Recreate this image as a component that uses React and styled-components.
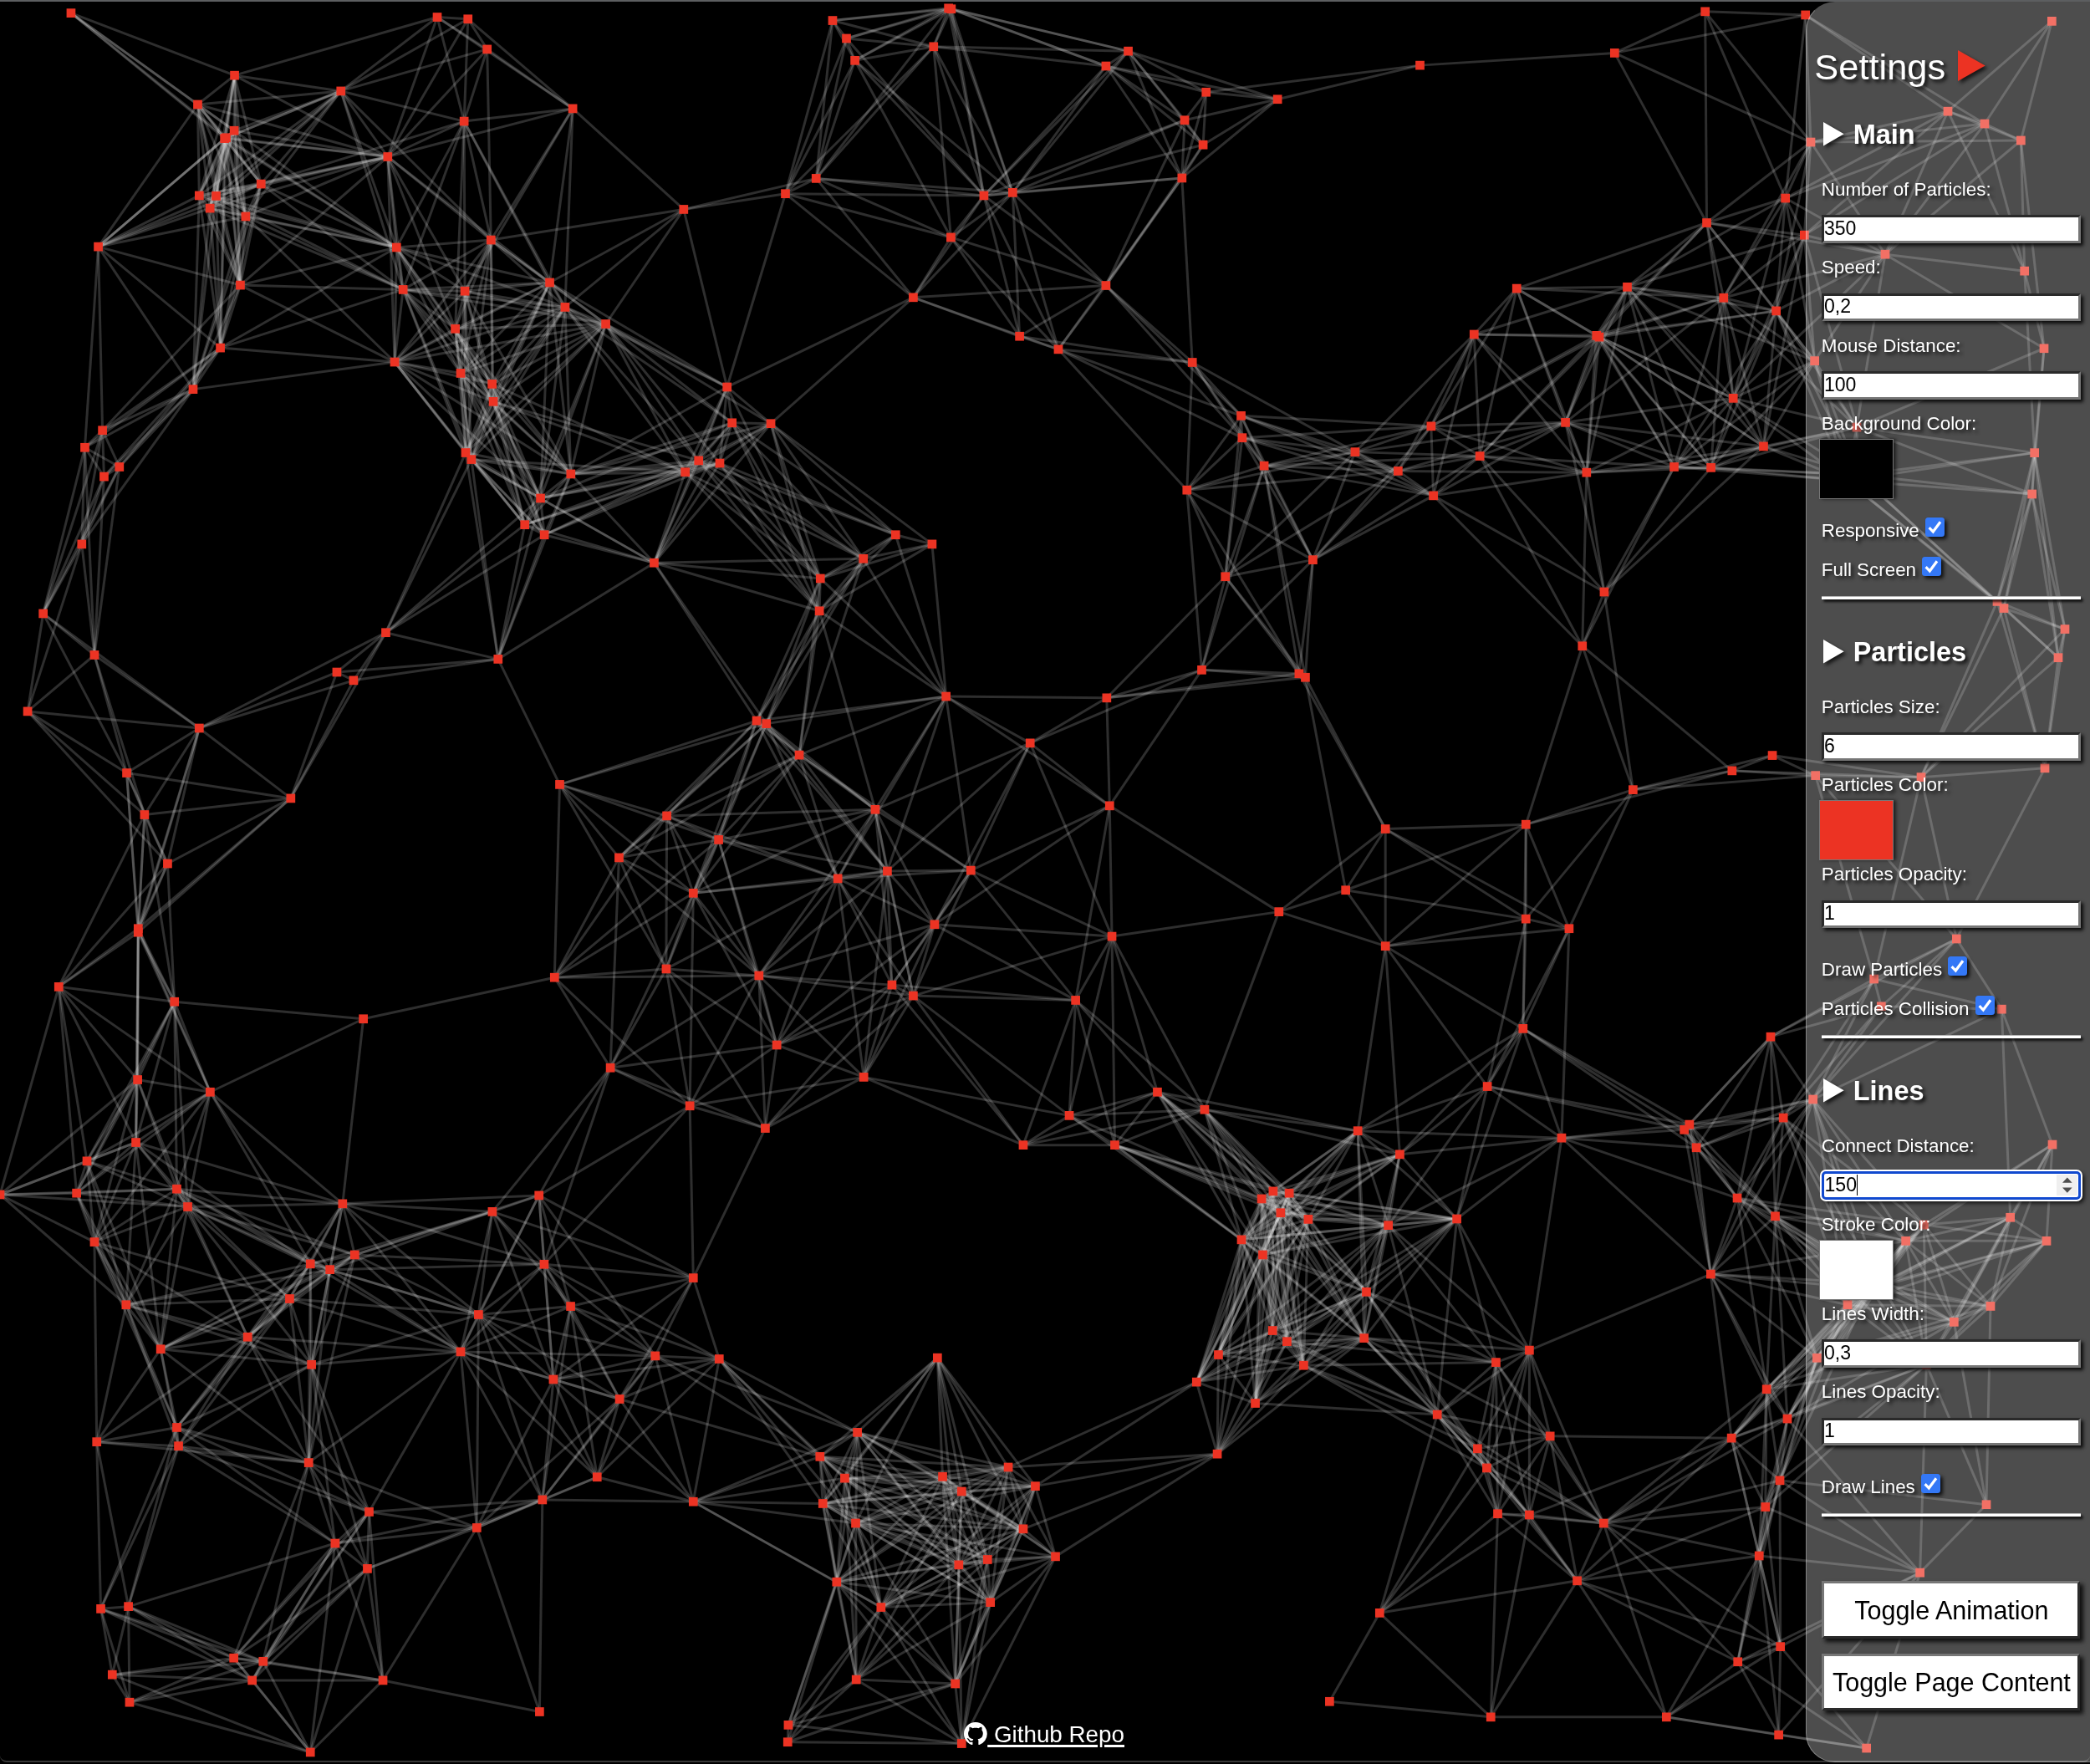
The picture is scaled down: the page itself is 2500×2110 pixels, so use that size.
import React, { useLayoutEffect, useRef } from "react";
import styled, { createGlobalStyle, css } from "styled-components";

const GlobalStyle = createGlobalStyle`
  html, body { margin: 0; padding: 0; background: #000; overflow: hidden; }
  *, *::before, *::after { box-sizing: border-box; }
`;

const FONT = `"Liberation Sans", Arial, Helvetica, sans-serif`;
const SHADOW = "3px 3px 4px rgba(0, 0, 0, 0.85)";

/* ---------- particle field ---------- */

const FIELD_WIDTH = 2500;
const FIELD_HEIGHT = 2108;
const TOP_EDGE = 2;
const PARTICLE_SIZE = 10.7;
const CONNECT_DISTANCE = 259;
const STROKE_WIDTH = 3;
const STROKE_COLOR = "rgba(255, 255, 255, 0.18)";

// Each region of the field keeps its own origin and unit; points are flat x,y pairs.
const REGIONS = [
  { x: 0, y: 0, ux: 720 / 1568, uy: 700 / 1568, points: [
    185,35, 1139,46, 1219,51, 1269,132, 611,202, 888,244, 515,280, 1492,291, 1209,325, 610,350,
    589,369, 585,371, 1010,420, 680,493, 519,524, 563,525, 547,558, 640,580, 256,661, 1033,663,
    1279,643, 626,764, 1050,776, 1211,780, 1432,757, 1472,823, 1186,881, 574,932, 1028,970,
    503,1043, 1200,1000, 1282,1029, 1285,1076, 267,1153, 221,1199, 311,1251, 271,1277, 1213,1213,
    1228,1231, 1487,1270, 1408,1335, 1367,1406, 1418,1433, 213,1458,
  ] },
  { x: 720, y: 0, ux: 720 / 1568, uy: 700 / 1568, points: [
    903,22, 910,24, 601,55, 637,103, 659,162, 864,125, 1371,137, 1313,177, 1518,322, 1511,477,
    558,478, 478,519, 995,524, 1070,516, 213,561, 909,636, 1313,765, 811,797, 10,868, 1088,901,
    1189,936, 1538,971, 326,1037, 339,1133, 440,1135, 252,1234, 307,1241, 217,1265, 1524,1313,
    765,1433, 860,1458, 681,1497, 136,1508, 569,1550,
  ] },
  { x: 1440, y: 0, ux: 720 / 1568, uy: 700 / 1568, points: [
    6,247, -2,388, 192,266, 563,175, 1070,142, 1306,31, 1515,531, 1310,597, 1103,769, 815,773,
    1354,798, 1491,833, 704,896, 1023,899, 1030,903, 97,1114, 100,1173, 157,1248, 592,1142,
    942,1132, 394,1211, 506,1262, 719,1222, 997,1266, 1225,1251, 1321,1253, 1458,1196, 1379,1067,
    598,1328, 284,1500, 56,1545,
  ] },
  { x: 0, y: 700, ux: 1080 / 1568, uy: 700 / 1568, points: [
    75,76, 164,187, 670,127, 865,198, 585,233, 614,255, 48,338, 346,383, 1314,363, 1331,371,
    1388,455, 220,503, 972,534, 505,571, 251,615, 1158,618, 1248,682, 1520,601, 1075,730, 291,746,
    1541,766, 1455,786, 1204,825, 240,920, 240,930, 102,1076, 303,1116, 631,1162, 963,1051,
    1157,1028, 1318,1046, 1549,1071, 1349,1232, 1060,1293, 239,1325, 365,1358, 1500,1318,
    1198,1395, 1329,1455, 236,1493, 151,1543, 1423,69,
  ] },
  { x: 1080, y: 700, ux: 1080 / 1568, uy: 700 / 1568, points: [
    1218,18, 1180,163, 519,227, 688,237, 699,247, 75,298, 354,302, 221,423, 1510,456, 1440,497,
    1268,548, 359,591, 838,653, 1082,641, 118,764, 769,817, 653,875, 1082,894, 1157,920, 55,909,
    838,967, 363,941, 18,1100, 300,1112, 1077,1188, 1507,1210, 1015,1343, 442,1358, 524,1405,
    289,1421, 209,1500, 368,1500, 790,1462, 863,1525, 1144,1481, 1366,1445, 1357,1459, 1378,1507,
    1529,1427,
  ] },
  { x: 0, y: 1400, ux: 1080 / 1568, uy: 710 / 1568, points: [
    0,64, 133,60, 307,49, 326,96, 595,88, 936,66, 855,109, 164,189, 616,223, 539,247, 573,262,
    945,248, 1204,284, 219,355, 503,339, 991,359, 831,381, 430,440, 279,472, 800,479, 1138,490,
    1249,498, 541,513, 961,552, 1076,604, 307,679, 310,728, 168,717, 536,772, 1037,810, 641,902,
    942,870, 1204,875, 828,944, 582,985, 638,1052, 223,1152, 175,1158, 406,1288, 457,1297,
    195,1332, 438,1347, 665,1347, 225,1405, 937,1430, 539,1537, 1489,692, 1424,756, 1467,813,
    1429,880, 1486,932, 1453,1087, 1530,1154, 1487,1345, 1369,1465, 1368,1510,
  ] },
  { x: 1080, y: 1400, ux: 1080 / 1568, uy: 710 / 1568, points: [
    643,55, 671,60, 623,75, 656,112, 704,129, 588,183, 625,223, 843,145, 962,128, 1449,73,
    1515,121, 1403,274, 805,321, 642,423, 667,452, 801,443, 548,487, 696,515, 510,559, 612,615,
    1088,475, 1030,507, 60,495, 546,749, 928,645, 1124,702, 998,735, 1014,786, 1033,907, 1088,910,
    1217,932, 1171,1084, 1500,578, 1536,656, 1439,707, 1523,819, 1498,889, 1487,1018, 183,784,
    230,834, 69,809, 102,848, 209,947, 265,1020, 97,1042, 147,1028, 152,1141, 91,1356, 102,1514,
    828,1169, 741,1403, 1021,1444, 1326,1444, 1450,1298, 1524,1258, 1521,1491,
  ] },
  { x: 2140, y: 0, ux: 1 / 3, uy: 0.338, points: [
    59,53, 943,75, 570,394, 702,438, 832,497, 78,503, 55,832, 345,900, 845,959, 915,1233,
    92,1277, 243,1512,
  ] },
  { x: 2140, y: 520, ux: 1 / 3, uy: 0.338, points: [
    881,64, 872,210, 207,162, 249,141, 747,590, 771,614, 990,688, 966,789, 95,1206, 474,1212,
    918,1180,
  ] },
  { x: 2140, y: 1050, ux: 1 / 3, uy: 0.338, points: [
    601,216, 305,358, 331,455, 763,465, 86,784, 945,944, 794,1202, 484,1228, 924,1285, 419,1285,
    331,1437, 290,1455, 210,1511, 723,1516, 592,1572,
  ] },
  { x: 2140, y: 1580, ux: 1 / 3, uy: 0.338, points: [
    100,131, 493,155, 708,650, 470,891, 278,1512,
  ] },
];

const PARTICLES = REGIONS.flatMap(({ x, y, ux, uy, points }) => {
  const out = [];
  for (let i = 0; i < points.length; i += 2) {
    out.push([x + points[i] * ux, y + points[i + 1] * uy - TOP_EDGE]);
  }
  return out;
});

const Field = styled.canvas`
  grid-area: 1 / 1;
  display: block;
  width: ${FIELD_WIDTH}px;
  height: ${FIELD_HEIGHT}px;
  background: #000;
`;

function ParticleField() {
  const ref = useRef(null);
  useLayoutEffect(() => {
    const ctx = ref.current.getContext("2d");
    ctx.clearRect(0, 0, FIELD_WIDTH, FIELD_HEIGHT);
    ctx.lineWidth = STROKE_WIDTH;
    ctx.strokeStyle = STROKE_COLOR;
    PARTICLES.forEach(([x, y], i) => {
      for (let j = i + 1; j < PARTICLES.length; j++) {
        const [a, b] = PARTICLES[j];
        if (Math.hypot(a - x, b - y) < CONNECT_DISTANCE) {
          ctx.beginPath();
          ctx.moveTo(x, y);
          ctx.lineTo(a, b);
          ctx.stroke();
        }
      }
    });
    ctx.fillStyle = "#ec3323";
    PARTICLES.forEach(([x, y]) => {
      ctx.fillRect(x - PARTICLE_SIZE / 2, y - PARTICLE_SIZE / 2, PARTICLE_SIZE, PARTICLE_SIZE);
    });
  }, []);
  return <Field ref={ref} width={FIELD_WIDTH} height={FIELD_HEIGHT} />;
}

/* ---------- page ---------- */

const Page = styled.div`
  display: grid;
  grid-template-columns: 2500px;
  grid-template-rows: 2108px;
  width: 2500px;
  height: 2110px;
  overflow: hidden;
  background: #000;
  border-top: 2px solid #5c5e60;
  font-family: ${FONT};
`;

const Frame = styled.div`
  grid-area: 1 / 1;
  height: 2106px;
  border-bottom: 2px solid #383838;
  border-bottom-left-radius: 8px;
  border-bottom-right-radius: 8px;
`;

const Footer = styled.footer`
  grid-area: 1 / 1;
  justify-self: start;
  align-self: end;
  margin: 0 0 18px 1153.4px;
`;

const RepoLink = styled.a`
  display: flex;
  align-items: center;
  height: 34px;
  color: #fff;
  font-size: 27.8px;
  line-height: 34px;
  text-decoration: none;
`;

const RepoText = styled.span`
  white-space: pre;
  text-decoration: underline;
  text-decoration-thickness: 2.5px;
  text-underline-offset: 3px;
`;

const GithubMark = styled.svg`
  width: 27.8px;
  height: 27.8px;
  margin-top: -3px;
  fill: #fff;
`;

/* ---------- settings panel ---------- */

const Panel = styled.aside`
  grid-area: 1 / 1;
  justify-self: end;
  width: 340px;
  height: 2106px;
  padding: 52px 10px 0 17.5px;
  background: rgba(255, 255, 255, 0.3);
  border: 1.7px solid rgba(255, 255, 255, 0.3);
  border-right: 0;
  border-top-color: transparent;
  border-radius: 35px 0 0 35px;
  color: #fff;
`;

const Title = styled.h1`
  display: flex;
  align-items: center;
  gap: 15px;
  height: 50px;
  margin: 0 0 37.1px -8.2px;
  font-size: 43.4px;
  font-weight: 400;
  line-height: 50px;
  text-shadow: ${SHADOW};
`;

const Heading = styled.h3`
  display: flex;
  align-items: center;
  gap: 11.5px;
  height: 38px;
  margin: 0 0 33.5px;
  padding-left: 2px;
  font-size: 32.5px;
  font-weight: 700;
  line-height: 38px;
  text-shadow: ${SHADOW};
`;

const Arrow = styled.svg`
  flex: none;
  width: ${(p) => p.$w}px;
  height: ${(p) => p.$h}px;
  margin-top: ${(p) => p.$shift}px;
  fill: ${(p) => p.$color};
  overflow: visible;
  filter: drop-shadow(3px 3px 2px rgba(0, 0, 0, 0.7));
`;

const Row = styled.div`
  display: flex;
  flex-direction: column;
  height: ${(p) => p.$height}px;
`;

const Label = styled.label`
  flex: none;
  height: 26px;
  font-size: 22.4px;
  line-height: 26px;
  margin-left: 0.3px;
  white-space: nowrap;
  text-shadow: ${SHADOW};
`;

const box = css`
  flex: none;
  width: 310.6px;
  height: 33.8px;
  margin: 17.4px 0 0 0.4px;
  background: #fff;
  color: #000;
  font-family: ${FONT};
  font-size: 23.1px;
  line-height: 25px;
  box-shadow: ${SHADOW};
`;

const Input = styled.input`
  ${box}
  padding: 0 0 1.6px;
  border: 3.5px solid;
  border-color: #2a2a2a #767676 #767676 #2a2a2a;
  border-radius: 0;
  outline: none;
`;

const FocusedBox = styled.div`
  ${box}
  display: flex;
  align-items: stretch;
  justify-content: space-between;
  padding: 1px 1.5px 1px 0;
  border: 3px solid #1049cf;
  border-radius: 5px;
  box-shadow: 0 0 0 2px #fff, 3px 3px 5px 1px rgba(0, 0, 0, 0.8);
`;

const Typed = styled.span`
  height: 25px;
  line-height: 24px;
  padding-left: 0.6px;
  border-right: 1.6px solid #000;
`;

const Spinner = styled.svg`
  width: 25px;
  height: 25px;
  background: #efefef;
`;

const Swatch = styled.div`
  flex: none;
  width: 89.5px;
  height: 72px;
  margin: 5px 0 0 -2.8px;
  background: ${(p) => p.$color};
  border: 1.8px solid #777;
  box-shadow: 3px 0 4px rgba(0, 0, 0, 0.6);
`;

const Checks = styled.div`
  padding-top: 9.4px;
`;

const CheckRow = styled.label`
  display: flex;
  align-items: flex-start;
  gap: 7px;
  height: 47px;
  margin-left: 0.3px;
  font-size: 22.4px;
  line-height: 47px;
  white-space: nowrap;
  text-shadow: ${SHADOW};
`;

const CheckBox = styled.svg`
  width: 23px;
  height: 23px;
  margin-top: 8px;
  border-radius: 3.5px;
  background: #3478f6;
  box-shadow: 3px 3px 4px rgba(0, 0, 0, 0.8);
`;

const Rule = styled.hr`
  width: 310.6px;
  height: 4px;
  margin: 8.3px 0 ${(p) => (p.$last ? 77 : 44)}px;
  background: #fff;
  border: 0;
  border-top: 1.5px solid #b4b4b4;
  box-shadow: 2.5px 3px 3px rgba(0, 0, 0, 0.8);
`;

const Button = styled.button`
  display: flex;
  align-items: center;
  justify-content: center;
  width: 309px;
  height: 68.4px;
  margin: 0 0 18.2px 0.4px;
  padding: 1px 0 0 2px;
  background: #fff;
  border: 3.5px solid;
  border-color: #767676 #2a2a2a #2a2a2a #767676;
  color: #000;
  font-family: ${FONT};
  font-size: 30.5px;
  white-space: nowrap;
  box-shadow: 4px 4px 5px rgba(0, 0, 0, 0.8);
`;

const Triangle = ({ w, h, color, shift = 0 }) => (
  <Arrow $w={w} $h={h} $color={color} $shift={shift} viewBox="0 0 10 10" preserveAspectRatio="none">
    <polygon points="0,0 10,5 0,10" />
  </Arrow>
);

const SectionTitle = ({ children }) => (
  <Heading>
    <Triangle w={24.7} h={28.4} color="#fff" shift={-2.5} />
    {children}
  </Heading>
);

const NumberField = ({ label, value }) => (
  <Row $height={93.6}>
    <Label>{label}</Label>
    <Input defaultValue={value} aria-label={label} />
  </Row>
);

const ActiveField = ({ label, value }) => (
  <Row $height={93.6}>
    <Label>{label}</Label>
    <FocusedBox>
      <Typed>{value}</Typed>
      <Spinner viewBox="0 0 25 25">
        <path d="M7 9.8 L12.8 3.6 L18.6 9.8 Z M7 15.6 L12.8 21.8 L18.6 15.6 Z" fill="#4d4d4d" />
      </Spinner>
    </FocusedBox>
  </Row>
);

const ColorField = ({ label, color }) => (
  <Row $height={107}>
    <Label>{label}</Label>
    <Swatch $color={color} />
  </Row>
);

const Check = ({ label }) => (
  <CheckRow>
    {label}
    <CheckBox viewBox="0 0 23 23">
      <path d="M4.6 12.2 L9.3 17 L18 5.2" fill="none" stroke="#fff" strokeWidth="3.2" />
    </CheckBox>
  </CheckRow>
);

export default function App() {
  return (
    <>
      <GlobalStyle />
      <Page>
        <ParticleField />
        <Frame />
        <Footer>
          <RepoLink href="#">
            <GithubMark viewBox="0 0 16 16">
              <path d="M8 0C3.58 0 0 3.58 0 8c0 3.54 2.29 6.53 5.47 7.59.4.07.55-.17.55-.38 0-.19-.01-.82-.01-1.49-2.01.37-2.53-.49-2.69-.94-.09-.23-.48-.94-.82-1.13-.28-.15-.68-.52-.01-.53.63-.01 1.08.58 1.23.82.72 1.21 1.87.87 2.33.66.07-.52.28-.87.51-1.07-1.78-.2-3.64-.89-3.64-3.95 0-.87.31-1.59.82-2.15-.08-.2-.36-1.02.08-2.12 0 0 .67-.21 2.2.82.64-.18 1.32-.27 2-.27.68 0 1.36.09 2 .27 1.53-1.04 2.2-.82 2.2-.82.44 1.1.16 1.92.08 2.12.51.56.82 1.27.82 2.15 0 3.07-1.87 3.75-3.65 3.95.29.25.54.73.54 1.48 0 1.07-.01 1.93-.01 2.2 0 .21.15.46.55.38A8.013 8.013 0 0016 8c0-4.42-3.58-8-8-8z" />
            </GithubMark>
            <RepoText>{" Github Repo"}</RepoText>
          </RepoLink>
        </Footer>
        <Panel>
          <Title>
            Settings
            <Triangle w={32.7} h={37} color="#ec3323" shift={-3} />
          </Title>

          <SectionTitle>Main</SectionTitle>
          <NumberField label="Number of Particles:" value="350" />
          <NumberField label="Speed:" value="0,2" />
          <NumberField label="Mouse Distance:" value="100" />
          <ColorField label="Background Color:" color="#000" />
          <Checks>
            <Check label="Responsive" />
            <Check label="Full Screen" />
          </Checks>
          <Rule />

          <SectionTitle>Particles</SectionTitle>
          <NumberField label="Particles Size:" value="6" />
          <ColorField label="Particles Color:" color="#ec3323" />
          <NumberField label="Particles Opacity:" value="1" />
          <Checks>
            <Check label="Draw Particles" />
            <Check label="Particles Collision" />
          </Checks>
          <Rule />

          <SectionTitle>Lines</SectionTitle>
          <ActiveField label="Connect Distance:" value="150" />
          <ColorField label="Stroke Color:" color="#fff" />
          <NumberField label="Lines Width:" value="0,3" />
          <NumberField label="Lines Opacity:" value="1" />
          <Checks>
            <Check label="Draw Lines" />
          </Checks>
          <Rule $last />

          <Button type="button">Toggle Animation</Button>
          <Button type="button">Toggle Page Content</Button>
        </Panel>
      </Page>
    </>
  );
}
